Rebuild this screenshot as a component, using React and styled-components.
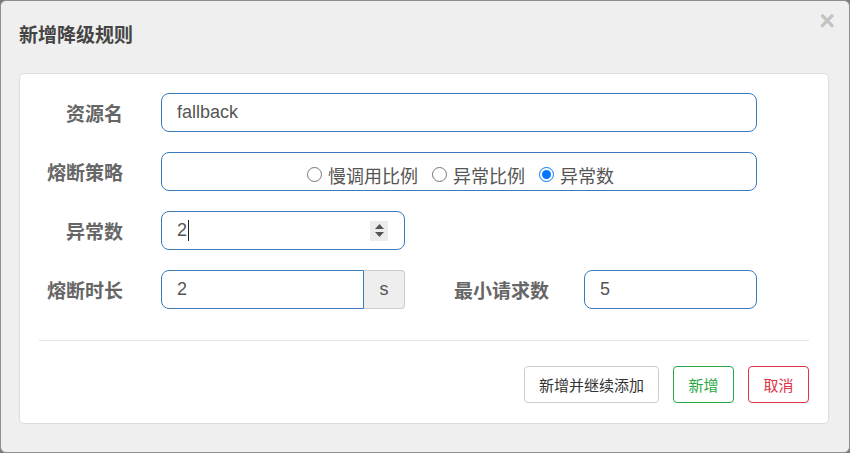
import React from "react";
import styled, { createGlobalStyle } from "styled-components";

const Global = createGlobalStyle`
  html, body { margin: 0; padding: 0; background: #7a7a7a; }
  body { font-family: "Liberation Sans", "Noto Sans CJK SC", sans-serif; }
  * { box-sizing: border-box; }
`;

const Modal = styled.div`
  width: 850px;
  height: 453px;
  border: 1px solid #8e8e8e;
  border-radius: 6px;
  background: #efefef;
  padding: 0 20px 0 18px;
  display: flex;
  flex-direction: column;
`;

const Header = styled.div`
  height: 72px;
  display: flex;
  justify-content: space-between;
  align-items: center;
  padding-bottom: 8px;
`;

const Title = styled.h4`
  margin: 0;
  font-size: 19px;
  font-weight: bold;
  color: #444;
  font-family: "Liberation Sans", "Noto Sans CJK SC", sans-serif;
`;

const Close = styled.button`
  align-self: flex-start;
  margin-top: 7px;
  margin-right: -6px;
  border: 0;
  background: none;
  padding: 0;
  font-family: "Liberation Sans", sans-serif;
  font-size: 27px;
  font-weight: bold;
  line-height: 1;
  color: #c2c2c2;
  cursor: pointer;
`;

const Panel = styled.div`
  background: #fff;
  border: 1px solid #dcdcdc;
  border-radius: 5px;
  padding: 19px 19px 19px;
  height: 351px;
`;

const Form = styled.div`
  display: grid;
  grid-template-columns: 122px 244px 179px 173px;
  grid-auto-rows: 39px;
  row-gap: 20px;
`;

const Label = styled.label`
  display: flex;
  align-items: center;
  justify-content: flex-end;
  padding-right: ${(p) => p.$pr || 38}px;
  font-size: 19px;
  font-weight: bold;
  color: #666;
  white-space: nowrap;
`;

const Field = styled.div`
  grid-column: ${(p) => p.$span || "auto"};
  display: flex;
  min-width: 0;
`;

const Box = styled.div`
  flex: 1;
  display: flex;
  align-items: center;
  justify-content: ${(p) => (p.$center ? "center" : "flex-start")};
  border: 1px solid #3a7bbd;
  border-radius: ${(p) => (p.$left ? "8px 0 0 8px" : "8px")};
  padding: ${(p) => (p.$center ? "6px 16px 0 19px" : "0 16px 0 15px")};
  background: #fff;
  min-width: 0;
`;

const TextInput = styled.input`
  flex: 1;
  min-width: 0;
  border: 0;
  outline: none;
  padding: 0;
  font-family: "Liberation Sans", "Noto Sans CJK SC", sans-serif;
  font-size: 18px;
  color: #555;
  background: transparent;
`;

const Value = styled.span`
  font-size: 18px;
  color: #555;
`;

const Caret = styled.span`
  display: inline-block;
  width: 1px;
  height: 21px;
  background: #222;
  margin-left: 1px;
  margin-right: auto;
`;

const Spinner = styled.div`
  width: 18px;
  height: 20px;
  background: #ececec;
  display: flex;
  flex-direction: column;
  align-items: center;
  justify-content: center;
  gap: 3px;
`;

const Addon = styled.div`
  width: 41px;
  display: flex;
  align-items: center;
  justify-content: center;
  background: #eee;
  border: 1px solid #ccc;
  border-left: 0;
  border-radius: 0 4px 4px 0;
  font-size: 18px;
  color: #555;
`;

const RadioItem = styled.label`
  display: flex;
  align-items: center;
  font-size: 18px;
  color: #555;
  margin-right: 14px;
  &:last-child { margin-right: 0; }
`;

const Radio = styled.input`
  width: 15px;
  height: 15px;
  margin: 0 6px 0 0;
`;

const Divider = styled.hr`
  margin: 31px 0 0;
  border: 0;
  border-top: 1px solid #e5e5e5;
`;

const Footer = styled.div`
  display: flex;
  justify-content: flex-end;
  gap: 14px;
  margin-top: 25px;
`;

const Button = styled.button`
  height: 37px;
  padding: 0 14px;
  min-width: 61px;
  background: #fff;
  border: 1px solid ${(p) => p.$color || "#ccc"};
  color: ${(p) => p.$text || "#333"};
  border-radius: 4px;
  font-family: "Liberation Sans", "Noto Sans CJK SC", sans-serif;
  font-size: 15px;
  cursor: pointer;
`;

const Arrow = ({ up }) => (
  <svg width="9" height="5" viewBox="0 0 9 5">
    <path d={up ? "M0 5 L4.5 0 L9 5 Z" : "M0 0 L4.5 5 L9 0 Z"} fill="#555" />
  </svg>
);

export default function App() {
  return (
    <>
      <Global />
      <Modal>
        <Header>
          <Title>新增降级规则</Title>
          <Close aria-label="close">×</Close>
        </Header>
        <Panel>
          <Form>
            <Label>资源名</Label>
            <Field $span="2 / 5">
              <Box>
                <TextInput defaultValue="fallback" />
              </Box>
            </Field>

            <Label>熔断策略</Label>
            <Field $span="2 / 5">
              <Box $center>
                <RadioItem>
                  <Radio type="radio" name="grade" />
                  慢调用比例
                </RadioItem>
                <RadioItem>
                  <Radio type="radio" name="grade" />
                  异常比例
                </RadioItem>
                <RadioItem>
                  <Radio type="radio" name="grade" defaultChecked />
                  异常数
                </RadioItem>
              </Box>
            </Field>

            <Label>异常数</Label>
            <Field $span="2 / 3">
              <Box>
                <Value>2</Value>
                <Caret />
                <Spinner>
                  <Arrow up />
                  <Arrow />
                </Spinner>
              </Box>
            </Field>
            <div />
            <div />

            <Label>熔断时长</Label>
            <Field>
              <Box $left>
                <TextInput defaultValue="2" />
              </Box>
              <Addon>s</Addon>
            </Field>
            <Label $pr={35}>最小请求数</Label>
            <Field>
              <Box>
                <TextInput defaultValue="5" />
              </Box>
            </Field>
          </Form>
          <Divider />
          <Footer>
            <Button>新增并继续添加</Button>
            <Button $color="#28a745" $text="#28a745">新增</Button>
            <Button $color="#dc3545" $text="#dc3545">取消</Button>
          </Footer>
        </Panel>
      </Modal>
    </>
  );
}
